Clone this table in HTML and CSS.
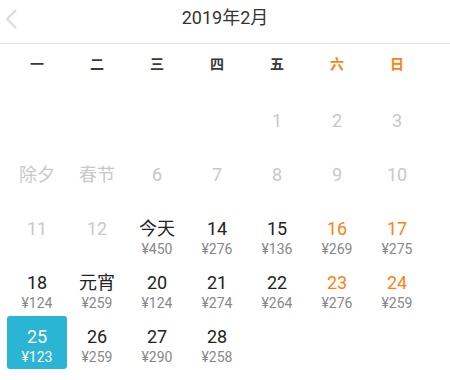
FILE: index.html
```html
<!DOCTYPE html>
<html lang="zh">
<head>
<meta charset="utf-8">
<link rel="stylesheet" href="styles.css">
</head>
<body>
<div class="cal">
  <div class="head">
    <span class="back"><svg width="14" height="20" viewBox="0 0 14 20"><polyline points="12,1 3,10 12,19" fill="none" stroke="#dcdcdc" stroke-width="2.2"/></svg></span>
    <span class="title">2019年2月</span>
    <span class="spacer"></span>
  </div>
  <div class="weeks">
    <span>一</span><span>二</span><span>三</span><span>四</span><span>五</span><span class="we">六</span><span class="we">日</span>
  </div>
  <div class="grid">
    <div class="cell"></div><div class="cell"></div><div class="cell"></div><div class="cell"></div>
    <div class="cell past"><span class="d">1</span></div>
    <div class="cell past"><span class="d">2</span></div>
    <div class="cell past"><span class="d">3</span></div>

    <div class="cell past"><span class="d">除夕</span></div>
    <div class="cell past"><span class="d">春节</span></div>
    <div class="cell past"><span class="d">6</span></div>
    <div class="cell past"><span class="d">7</span></div>
    <div class="cell past"><span class="d">8</span></div>
    <div class="cell past"><span class="d">9</span></div>
    <div class="cell past"><span class="d">10</span></div>

    <div class="cell past"><span class="d">11</span></div>
    <div class="cell past"><span class="d">12</span></div>
    <div class="cell"><span class="d">今天</span><span class="p">¥450</span></div>
    <div class="cell"><span class="d">14</span><span class="p">¥276</span></div>
    <div class="cell"><span class="d">15</span><span class="p">¥136</span></div>
    <div class="cell wk"><span class="d">16</span><span class="p">¥269</span></div>
    <div class="cell wk"><span class="d">17</span><span class="p">¥275</span></div>

    <div class="cell"><span class="d">18</span><span class="p">¥124</span></div>
    <div class="cell"><span class="d">元宵</span><span class="p">¥259</span></div>
    <div class="cell"><span class="d">20</span><span class="p">¥124</span></div>
    <div class="cell"><span class="d">21</span><span class="p">¥274</span></div>
    <div class="cell"><span class="d">22</span><span class="p">¥264</span></div>
    <div class="cell wk"><span class="d">23</span><span class="p">¥276</span></div>
    <div class="cell wk"><span class="d">24</span><span class="p">¥259</span></div>

    <div class="cell sel"><span class="d">25</span><span class="p">¥123</span></div>
    <div class="cell"><span class="d">26</span><span class="p">¥259</span></div>
    <div class="cell"><span class="d">27</span><span class="p">¥290</span></div>
    <div class="cell"><span class="d">28</span><span class="p">¥258</span></div>
  </div>
</div>
</body>
</html>
```
FILE: styles.css
```css
html, body {
  margin: 0;
  padding: 0;
  background: #fff;
}
body {
  font-family: Roboto, "Noto Sans CJK SC", sans-serif;
  color: #333;
}
.cal {
  width: 450px;
}
.head {
  display: flex;
  align-items: flex-start;
  height: 44px;
  border-bottom: 1px solid #e2e2e2;
  box-sizing: border-box;
}
.back {
  width: 22px;
  padding-left: 4px;
  padding-top: 9px;
  display: flex;
}
.spacer {
  width: 26px;
}
.title {
  flex: 1;
  text-align: center;
  font-size: 18px;
  line-height: 36px;
  color: #333;
}
.weeks {
  display: grid;
  grid-template-columns: repeat(7, 60px);
  padding-left: 7px;
  height: 41px;
  line-height: 40px;
  font-size: 14px;
  font-weight: 700;
  text-align: center;
  color: #3a3a3a;
}
.weeks .we {
  color: #ff7f11;
}
.grid {
  display: grid;
  grid-template-columns: repeat(7, 60px);
  grid-auto-rows: 53px;
  row-gap: 1px;
  padding-left: 7px;
  margin-top: 15px;
}
.cell {
  display: flex;
  flex-direction: column;
  align-items: center;
  padding-top: 11px;
  box-sizing: border-box;
  border-radius: 3px;
}
.d {
  font-size: 18px;
  line-height: 20px;
  color: #222;
}
.p {
  font-size: 14px;
  line-height: 15px;
  margin-top: 3px;
  color: #888;
}
.past .d {
  color: #c8c8c8;
}
.wk .d {
  color: #ff7f11;
}
.sel {
  background: #29b5d3;
}
.sel .d, .sel .p {
  color: #fff;
}
```
